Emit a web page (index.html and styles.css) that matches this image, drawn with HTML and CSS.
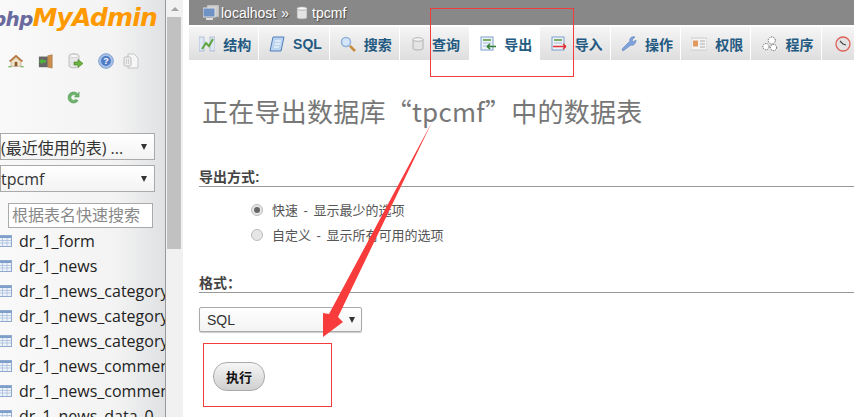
FILE: index.html
```html
<!DOCTYPE html>
<html lang="zh-CN">
<head>
  <meta charset="UTF-8">
  <title>phpMyAdmin - 导出</title>
  <link rel="stylesheet" href="styles.css">
</head>
<body>
  <aside class="sidebar">
    <div class="logo"><span class="logo-php">php</span><span class="logo-my">MyAdmin</span></div>
    <div class="quick-icons">
      <svg viewBox="0 0 18 16"><path d="M1 8 9 1l8 7-1.500 1L9 3.500 2.500 9z" fill="#b5703a"/><path d="M3.500 8.500 9 4l5.500 4.500V14h-11z" fill="#f2e3c6" stroke="#a98a5e" stroke-width=".6"/><rect x="7.500" y="9" width="3" height="5" fill="#8a5a30"/><path d="M0 15c1-2 3-2 4 0zM14 15c1-2 3-2 4 0z" fill="#5aa545"/></svg>
      <svg viewBox="0 0 18 16"><rect x="1" y="3" width="10" height="12" fill="#666"/><path d="M11 2l5-1v15l-5-1z" fill="#c98f50" stroke="#96602c" stroke-width=".5"/><path d="M1 8.500 5 5v2h4v3H5v2z" fill="#4fae3e"/></svg>
      <svg viewBox="0 0 16 16"><path d="M1 3c0-3 10-3 10 0v10c0 2.500-10 2.500-10 0z" fill="#e6e6e6" stroke="#aaa" stroke-width=".7"/><ellipse cx="6" cy="3" rx="4.500" ry="1.600" fill="#f7f7f7" stroke="#bbb" stroke-width=".5"/><path d="M6 9h4V6.500l5 4-5 4V12H6z" fill="#6db33f" stroke="#3f7d20" stroke-width=".6"/></svg>
      <svg viewBox="0 0 16 16"><circle cx="8" cy="8" r="7.300" fill="#a9c3e8" stroke="#7f9fd0"/><circle cx="8" cy="8" r="5" fill="#4f7cc4"/><text x="8" y="11" class="help-mark">?</text></svg>
      <svg class="docs-icon" viewBox="0 0 16 16"><path d="M5 1h6l4 4v10H5z" fill="#f6f6f6" stroke="#c4c4c4"/><rect x="1" y="4" width="7" height="9" rx="1.500" fill="#eee" stroke="#bbb"/><path d="M3.500 6v5M5.500 6v5" stroke="#ccc"/></svg>
    </div>
    <div class="reload-row">
      <svg viewBox="0 0 14 16"><path d="M12 4.500A6 6 0 1 0 12 11.500L9.500 10A3 3 0 1 1 9.500 6L8 7.500h5V2z" fill="#6fb46c" stroke="#3e8a46" stroke-width=".5"/></svg>
    </div>
    <div class="fake-select side-select"><span>(最近使用的表) ...</span><i class="caret"></i></div>
    <div class="fake-select side-select"><span>tpcmf</span><i class="caret"></i></div>
    <div class="filter-wrap"><input class="filter" type="text" placeholder="根据表名快速搜索"></div>
    <ul class="tables">
      <li><svg class="tbl" viewBox="0 0 14 12"><use href="#tbl"/></svg>dr_1_form</li>
      <li><svg class="tbl" viewBox="0 0 14 12"><use href="#tbl"/></svg>dr_1_news</li>
      <li><svg class="tbl" viewBox="0 0 14 12"><use href="#tbl"/></svg>dr_1_news_category</li>
      <li><svg class="tbl" viewBox="0 0 14 12"><use href="#tbl"/></svg>dr_1_news_category</li>
      <li><svg class="tbl" viewBox="0 0 14 12"><use href="#tbl"/></svg>dr_1_news_category</li>
      <li><svg class="tbl" viewBox="0 0 14 12"><use href="#tbl"/></svg>dr_1_news_comment</li>
      <li><svg class="tbl" viewBox="0 0 14 12"><use href="#tbl"/></svg>dr_1_news_comment</li>
      <li><svg class="tbl" viewBox="0 0 14 12"><use href="#tbl"/></svg>dr_1_news_data_0</li>
    </ul>
  </aside>

  <div class="scrollbar">
    <div class="scroll-up"></div>
    <div class="scroll-thumb"></div>
  </div>

  <main class="content">
    <div class="crumbs">
      <svg viewBox="0 0 16 16"><rect x="4" y="0" width="12" height="12" fill="#ccc" stroke="#999" stroke-width=".5"/><rect x="0" y="3" width="12" height="9" fill="#6f93c5" stroke="#ddd"/><rect x="3" y="13" width="7" height="2" fill="#ddd"/></svg>
      <span>localhost</span><span class="sep">»</span>
      <svg class="db-icon" viewBox="0 0 12 14"><use href="#db"/></svg>
      <span>tpcmf</span>
    </div>

    <nav class="tabs">
      <a class="tab"><svg viewBox="0 0 16 16"><rect x="0" y="1" width="5" height="14" fill="#dfe7f2" stroke="#8ea6c8" stroke-width=".6"/><rect x="11" y="1" width="5" height="14" fill="#dfe7f2" stroke="#8ea6c8" stroke-width=".6"/><path d="M3 13l4-6 3 3 4-7" fill="none" stroke="#5da53e" stroke-width="2"/></svg>结构</a>
      <a class="tab"><svg viewBox="0 0 16 16"><path d="M4 1h11l-3 14H1z" fill="#bcd3f0" stroke="#4f7fb8"/><path d="M6 5h6M5.500 8h6M5 11h5" stroke="#fff"/></svg>SQL</a>
      <a class="tab"><svg viewBox="0 0 16 16"><circle cx="6" cy="6" r="4.500" fill="#d6e6f8" stroke="#8fb0d8" stroke-width="1.500"/><path d="M10 10l5 5" stroke="#c98a3c" stroke-width="2.500"/></svg>搜索</a>
      <a class="tab"><svg class="db-icon" viewBox="0 0 12 14"><use href="#db"/></svg>查询</a>
      <a class="tab active"><svg viewBox="0 0 16 16"><rect x="1" y="1" width="12" height="13" fill="#eef3fa" stroke="#7f9fcb"/><path d="M3 4h8" stroke="#7fae6a" stroke-width="2"/><path d="M3 7h8M3 10h8" stroke="#a8bcd8"/><path d="M16 10.500H7M7 10.500l3-2.500M7 10.500l3 2.500" fill="none" stroke="#2f7d32" stroke-width="1.400"/></svg>导出</a>
      <a class="tab"><svg viewBox="0 0 16 16"><rect x="1" y="1" width="12" height="13" fill="#eef3fa" stroke="#7f9fcb"/><path d="M3 4h8" stroke="#7fae6a" stroke-width="2"/><path d="M3 7h8" stroke="#a8bcd8"/><path d="M2 10.500h13M15 10.500l-3-2.500M15 10.500l-3 2.500" fill="none" stroke="#e03030" stroke-width="1.400"/></svg>导入</a>
      <a class="tab"><svg viewBox="0 0 16 16"><path d="M2 15 1 13l8-8c-1-3 2-5 5-4l-3 3 1 2 3-2c0 4-3 6-5 5z" fill="#7ea3de" stroke="#5b80b8" stroke-width=".6"/></svg>操作</a>
      <a class="tab"><svg viewBox="0 0 16 16"><rect x="0" y="2" width="16" height="12" fill="#f4f4f4" stroke="#ccc"/><rect x="2" y="4.500" width="5" height="6" fill="#e09a60"/><path d="M9 5h5M9 8h5M9 11h5" stroke="#aaa"/></svg>权限</a>
      <a class="tab"><svg viewBox="0 0 18 18"><g fill="#fff" stroke="#555" stroke-width="1" stroke-dasharray="1.500 1"><circle cx="11" cy="5" r="4"/><circle cx="4.500" cy="12" r="3.500"/><circle cx="13" cy="13" r="3.500"/></g></svg>程序</a>
      <a class="tab tab-cut"><svg viewBox="0 0 16 16"><circle cx="8" cy="8" r="7" fill="#e3e3e3" stroke="#e0605a" stroke-width="1.300"/><path d="M5 5l3 3 3 1" fill="none" stroke="#444" stroke-width="1.100"/></svg></a>
    </nav>

    <div class="page">
      <h2 class="title">正在导出数据库“tpcmf”中的数据表</h2>

      <h3 class="section first">导出方式:</h3>
      <div class="options">
        <label class="option"><i class="radio checked"></i>快速 - 显示最少的选项</label>
        <label class="option"><i class="radio"></i>自定义 - 显示所有可用的选项</label>
      </div>

      <h3 class="section second">格式：</h3>
      <div class="fake-select format-select"><span>SQL</span><i class="caret"></i></div>
      <div class="actions"><button class="go" type="button">执行</button></div>
    </div>
  </main>

  <!-- annotations drawn over the screenshot -->
  <div class="mark mark-tab"></div>
  <div class="mark mark-go"></div>
  <svg class="arrow" viewBox="0 0 854 417">
    <polygon points="432,122 338,317 343,322 323,337 323,313 329,314" fill="#f83c3c"/>
  </svg>

  <svg class="defs" width="0" height="0">
    <defs>
      <g id="tbl"><rect x=".5" y=".5" width="13" height="11" fill="#eef3fa" stroke="#8fa9cf"/><rect x="1" y="1" width="12" height="2" fill="#7f9fcb"/><path d="M1 5.500h12M1 8h12M4.500 3v8M9 3v8" stroke="#a9bedc" stroke-width=".8"/></g>
      <g id="db"><path d="M1 2.500v9c0 2 10 2 10 0v-9z" fill="#e4e4e4" stroke="#999" stroke-width=".7"/><ellipse cx="6" cy="2.500" rx="5" ry="1.800" fill="#f6f6f6" stroke="#999" stroke-width=".7"/></g>
    </defs>
  </svg>
</body>
</html>
```

FILE: styles.css
```css
html, body {
  margin: 0;
  height: 417px;
  overflow: hidden;
}

body {
  display: flex;
  position: relative;
  background: #fff;
  font-family: "Liberation Sans", "Noto Sans CJK SC", sans-serif;
  color: #444;
}

/* left navigation */
.sidebar {
  width: 165px;
  height: 417px;
  flex: none;
  overflow: hidden;
  background: linear-gradient(to right, #f9f9f9 0, #f3f3f3 70%, #dfe1e3 100%);
  border-right: 1px solid #999;
}

.logo {
  display: flex;
  justify-content: flex-end;
  align-items: baseline;
  height: 35px;
  padding: 0 8px 0 0;
  white-space: nowrap;
  font: italic bold 25px/36px "DejaVu Sans", sans-serif;
  letter-spacing: -0.8px;
}

.logo-php {
  color: #6a6a9f;
  font-size: 20px;
}

.logo-my {
  color: #ff9900;
}

.quick-icons {
  display: flex;
  align-items: center;
  height: 18px;
  margin-top: 17px;
  padding-left: 8px;
  gap: 14px;
}

.quick-icons svg {
  width: 16px;
  height: 16px;
}

.quick-icons .docs-icon {
  margin-left: -5px;
}

.help-mark {
  font: bold 9px "Liberation Sans", sans-serif;
  text-anchor: middle;
  fill: #fff;
}

.reload-row {
  display: flex;
  justify-content: center;
  margin-top: 20px;
  padding-right: 18px;
  height: 16px;
}

.reload-row svg {
  width: 13px;
  height: 15px;
}

.fake-select {
  display: flex;
  align-items: center;
  justify-content: space-between;
  box-sizing: border-box;
  border: 1px solid #aaa;
  background: linear-gradient(to bottom, #fff, #f3f3f3);
  color: #333;
}

.side-select {
  width: 155px;
  height: 27px;
  padding-left: 0;
  padding-right: 7px;
  font-family: "Open Sans", "Noto Sans CJK SC", sans-serif;
  font-size: 16px;
  white-space: nowrap;
  margin-top: 5px;
}

.reload-row + .side-select {
  margin-top: 27px;
}

.caret {
  width: 0;
  height: 0;
  border-left: 3px solid transparent;
  border-right: 3px solid transparent;
  border-top: 6px solid #333;
}

.filter-wrap {
  padding: 11px 0 0 8px;
}

.filter {
  display: block;
  box-sizing: border-box;
  width: 145px;
  height: 25px;
  padding: 0 3px;
  border: 1px solid #aaa;
  border-radius: 0;
  background: #fff;
  font: 16px "Liberation Sans", "Noto Sans CJK SC", sans-serif;
}

.filter::placeholder {
  color: #888;
}

.tables {
  list-style: none;
  margin: 0;
  padding: 0;
}

.tables li {
  display: flex;
  align-items: center;
  height: 25px;
  white-space: nowrap;
  font: 16px "Open Sans", sans-serif;
  color: #222;
}

.tbl {
  width: 14px;
  height: 12px;
  margin-left: -2px;
  margin-right: 7px;
  flex: none;
}

/* browser scrollbar of the navigation frame */
.scrollbar {
  width: 17px;
  flex: none;
  background: #f1f1f1;
  padding-left: 1px;
  box-sizing: border-box;
}

.scroll-up {
  height: 17px;
  position: relative;
}

.scroll-up::after {
  content: "";
  position: absolute;
  left: 4px;
  top: 7px;
  border-left: 4px solid transparent;
  border-right: 4px solid transparent;
  border-bottom: 4px solid #a3a3a3;
}

.scroll-thumb {
  height: 232px;
  width: 14px;
  background: #c1c1c1;
}

/* right side */
.content {
  flex: 1;
  min-width: 0;
  padding-left: 6px;
  overflow: hidden;
}

.crumbs {
  display: flex;
  align-items: center;
  height: 25px;
  padding-left: 14px;
  background: #888;
  color: #fff;
  font-size: 14px;
  text-shadow: 1px 1px 1px #444;
  white-space: nowrap;
}

.crumbs svg {
  width: 16px;
  height: 16px;
  margin-right: 2px;
}

.crumbs .db-icon {
  width: 12px;
  height: 14px;
  margin-right: 4px;
}

.crumbs .sep {
  margin: 0 7px 0 5px;
}

.tabs {
  display: flex;
  height: 33px;
  margin-top: 2px;
  white-space: nowrap;
}

.tab {
  display: flex;
  align-items: center;
  justify-content: center;
  gap: 8px;
  box-sizing: border-box;
  width: 70.3px;
  flex: none;
  padding-left: 3px;
  border-right: 1px solid #fff;
  background: linear-gradient(to bottom, #f5f5f5, #dedede);
  color: #235a81;
  font-size: 14px;
  font-weight: bold;
}

.tab svg {
  width: 16px;
  height: 16px;
}

.tab .db-icon {
  width: 12px;
  height: 14px;
}

.tab.active {
  background: #fff;
}

.tab-cut {
  justify-content: flex-start;
  padding-left: 13px;
}

.page {
  padding-left: 10px;
}

.title {
  margin: 34px 0 0 3px;
  color: #777;
  font-family: "Noto Sans CJK SC", sans-serif;
  font-size: 26px;
  font-weight: normal;
  letter-spacing: 0.25px;
  line-height: 34px;
  white-space: nowrap;
}

.section {
  margin: 0;
  border-bottom: 1px solid #999;
  font-size: 14px;
  line-height: 18px;
  color: #444;
}

.section.first {
  margin-top: 40px;
}

.section.second {
  margin-top: 27px;
}

.options {
  padding: 10px 0 0 52px;
}

.option {
  display: flex;
  align-items: center;
  gap: 9px;
  height: 25px;
  font-size: 13px;
  word-spacing: 2px;
  color: #555;
}

.radio {
  box-sizing: border-box;
  display: flex;
  align-items: center;
  justify-content: center;
  width: 12px;
  height: 12px;
  border: 1px solid #bbb;
  border-radius: 50%;
  background: #e6e6e6;
}

.radio.checked::after {
  content: "";
  width: 6px;
  height: 6px;
  border-radius: 50%;
  background: #666;
}

.format-select {
  width: 163px;
  height: 25px;
  margin-top: 14px;
  padding: 0 6px 0 7px;
  border-radius: 2px;
  font-size: 14px;
  box-shadow: 0 1px 1px #ccc;
}

.actions {
  padding: 30px 0 0 14px;
}

.go {
  box-sizing: border-box;
  display: block;
  width: 52px;
  height: 29px;
  padding: 0;
  border: 1px solid #aaa;
  border-radius: 14px;
  background: linear-gradient(to bottom, #f6f6f6, #cfcfcf);
  font: bold 13px "Liberation Sans", "Noto Sans CJK SC", sans-serif;
  color: #111;
}

/* red marks on top of the page */
.mark {
  position: absolute;
  box-sizing: border-box;
  border: 1px solid #f33c3c;
}

.mark-tab {
  left: 430px;
  top: 8px;
  width: 144px;
  height: 69px;
}

.mark-go {
  left: 203px;
  top: 343px;
  width: 129px;
  height: 64px;
}

.arrow {
  position: absolute;
  left: 0;
  top: 0;
  width: 854px;
  height: 417px;
  pointer-events: none;
}

.defs {
  position: absolute;
}
```
